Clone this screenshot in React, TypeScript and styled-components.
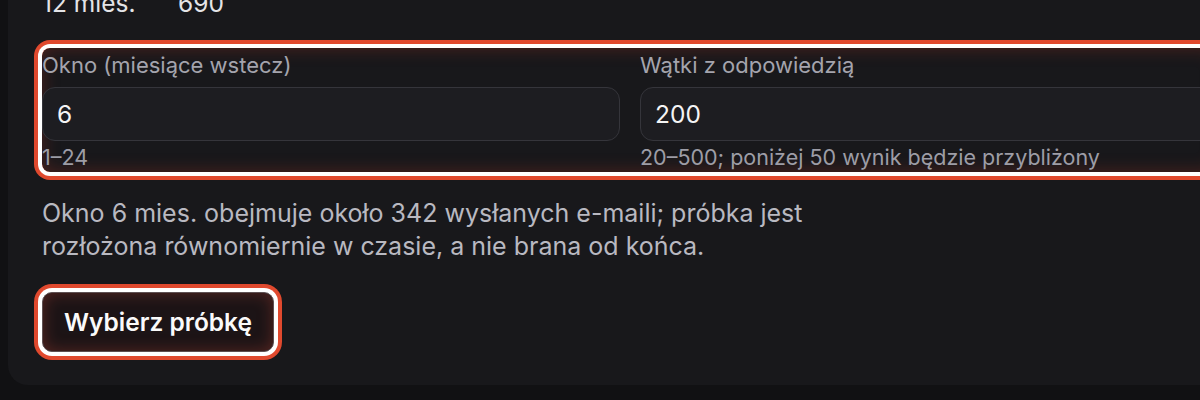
import React from "react";
import styled, { createGlobalStyle } from "styled-components";

const GlobalStyle = createGlobalStyle`
  html, body {
    margin: 0;
    padding: 0;
    background: #111113;
    overflow: hidden;
  }
  body {
    font-family: Inter, "Noto Sans", "Liberation Sans", sans-serif;
    -webkit-font-smoothing: antialiased;
  }
`;

const Page = styled.div`
  padding-left: 8px;
  height: 400px;
`;

const Card = styled.section`
  width: 1244px;
  box-sizing: border-box;
  background: #18181b;
  border-radius: 0 0 20px 20px;
  padding: 0 34px 33px;
`;

const StatsRow = styled.div`
  display: grid;
  grid-template-columns: 136px auto;
  margin-top: -14px;
  font-size: 24.5px;
  line-height: 34px;
  color: #e4e4e7;
`;

// highlighted area round the two inputs
const Highlight = styled.div`
  margin-top: 28px;
  border-radius: 8px;
  box-shadow:
    0 0 0 4px #ffffff,
    0 0 0 8px #e0492e,
    inset 0 0 18px rgba(220, 60, 40, 0.28);
`;

const FieldGrid = styled.div`
  display: grid;
  grid-template-columns: 1fr 1fr;
  column-gap: 20px;
  padding-bottom: 1px;
`;

const Field = styled.label`
  display: flex;
  flex-direction: column;
`;

const Label = styled.span`
  font-size: 22px;
  line-height: 34px;
  color: #a4a4ad;
`;

const Input = styled.input`
  margin-top: 5px;
  height: 54px;
  box-sizing: border-box;
  padding: 0 14px;
  border: 1px solid #35353b;
  border-radius: 13px;
  background: #1d1d21;
  color: #f4f4f5;
  font-family: inherit;
  font-size: 24.5px;
  outline: none;
`;

const Hint = styled.span`
  margin-top: 2px;
  font-size: 21.5px;
  line-height: 28px;
  color: #9d9da6;
`;

const Note = styled.p`
  margin: 25px 0 0;
  max-width: 810px;
  font-size: 25px;
  line-height: 33px;
  color: #b9b9c1;
`;

const Button = styled.button`
  margin-top: 29px;
  height: 60px;
  padding: 0 21px;
  border: 1px solid #5e5052;
  border-radius: 10px;
  background: #1c1416;
  color: #fafafa;
  font-family: inherit;
  font-size: 24.5px;
  font-weight: 600;
  cursor: pointer;
  box-shadow:
    0 0 0 4px #ffffff,
    0 0 0 8px #e0492e,
    inset 0 0 16px rgba(230, 80, 60, 0.3);
`;

const App = () => {
  return (
    <>
      <GlobalStyle />
      <Page>
        <Card>
          <StatsRow>
            <span>12 mies.</span>
            <span>690</span>
          </StatsRow>
          <Highlight>
            <FieldGrid>
              <Field>
                <Label>Okno (miesiące wstecz)</Label>
                <Input type="text" defaultValue="6" />
                <Hint>1–24</Hint>
              </Field>
              <Field>
                <Label>Wątki z odpowiedzią</Label>
                <Input type="text" defaultValue="200" />
                <Hint>20–500; poniżej 50 wynik będzie przybliżony</Hint>
              </Field>
            </FieldGrid>
          </Highlight>
          <Note>
            Okno 6 mies. obejmuje około 342 wysłanych e-maili; próbka jest
            rozłożona równomiernie w czasie, a nie brana od końca.
          </Note>
          <Button type="button">Wybierz próbkę</Button>
        </Card>
      </Page>
    </>
  );
};

export default App;
